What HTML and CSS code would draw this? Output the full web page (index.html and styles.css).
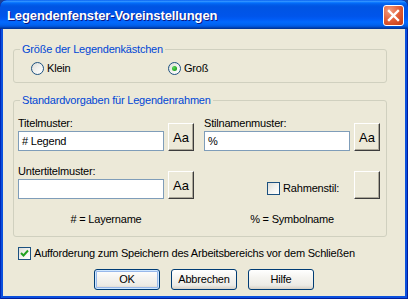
FILE: index.html
```html
<!DOCTYPE html>
<html lang="de">
<head>
<meta charset="utf-8">
<title>Legendenfenster-Voreinstellungen</title>
<link rel="stylesheet" href="styles.css">
</head>
<body>
<div class="window">
  <div class="titlebar">
    <span class="title">Legendenfenster-Voreinstellungen</span>
    <div class="close">
      <svg width="19" height="19" viewBox="0 0 19 19"><path d="M5 5 L14 14 M14 5 L5 14" stroke="#fff" stroke-width="2.4" stroke-linecap="square" fill="none"/></svg>
    </div>
  </div>
  <div class="client">
    <div class="group g1">
      <div class="legend">Größe der Legendenkästchen</div>
      <div class="radios">
        <label class="radio r1"><span class="rb"></span>Klein</label>
        <label class="radio"><span class="rb on"><span class="dot"></span></span>Groß</label>
      </div>
    </div>
    <div class="group g2">
      <div class="legend">Standardvorgaben für Legendenrahmen</div>
      <div class="grid">
        <div class="field">
          <div class="fcol"><div class="lbl">Titelmuster:</div><div class="input"># Legend</div></div>
          <div class="btn3d">Aa</div>
        </div>
        <div class="field">
          <div class="fcol"><div class="lbl">Stilnamenmuster:</div><div class="input">%</div></div>
          <div class="btn3d">Aa</div>
        </div>
        <div class="field">
          <div class="fcol"><div class="lbl">Untertitelmuster:</div><div class="input"></div></div>
          <div class="btn3d">Aa</div>
        </div>
        <div class="rahmen">
          <label class="check rcheck"><span class="cb"></span>Rahmenstil:</label>
          <div class="btn3d"></div>
        </div>
        <div class="note"># = Layername</div>
        <div class="note">% = Symbolname</div>
      </div>
    </div>
    <label class="check save"><span class="cb"><svg width="11" height="11" viewBox="0 0 11 11"><path d="M2 5 L4.5 7.5 L9 2.5" stroke="#21A121" stroke-width="2" fill="none"/></svg></span>Aufforderung zum Speichern des Arbeitsbereichs vor dem Schließen</label>
    <div class="buttons">
      <div class="xpbtn default">OK</div>
      <div class="xpbtn">Abbrechen</div>
      <div class="xpbtn">Hilfe</div>
    </div>
  </div>
</div>
</body>
</html>
```
FILE: styles.css
```css
html, body {
  margin: 0;
  padding: 0;
  background: #1D4193;
}
* { box-sizing: border-box; }

.window {
  width: 408px;
  height: 299px;
  display: flex;
  flex-direction: column;
  background: #0A4FDD;
  border-radius: 7px 7px 0 0;
  overflow: hidden;
  box-shadow: inset 1px 0 #0027B8, inset -1px 0 #001E9C, inset 0 -1px #001E9C;
  font-family: "Liberation Sans", Arial, sans-serif;
  font-size: 11px;
  letter-spacing: -0.2px;
  color: #000;
}

.titlebar {
  height: 29px;
  flex: none;
  display: flex;
  align-items: flex-start;
  padding: 5px 4px 0 7px;
  border-radius: 7px 7px 0 0;
  background: linear-gradient(to bottom, #0058EE 0%, #3593FF 4%, #288EFF 6%, #127DFF 8%, #036FFC 10%, #0262EE 14%, #0057E5 20%, #0054E3 24%, #0055EB 56%, #005BF5 66%, #026AFE 76%, #0062EF 86%, #0052D6 92%, #0040AB 96%, #003092 100%);
}
.title {
  margin-top: 3px;
  font-weight: bold;
  font-size: 13px;
  line-height: 16px;
  letter-spacing: -0.1px;
  color: #fff;
  text-shadow: 1px 1px #0A1883;
}
.close {
  margin-left: auto;
  width: 21px;
  height: 21px;
  border: 1px solid #fff;
  border-radius: 3px;
  background: radial-gradient(circle at 30% 25%, #F19C7F 0%, #E4633D 45%, #D24A22 75%, #C13A17 100%);
}
.close svg { display: block; }

.client {
  flex: 1;
  margin: 0 3px 3px;
  background: #ECE9D8;
  padding: 20px 10px 0;
}

.group {
  width: 374px;
  border: 1px solid #D0D0BF;
  border-radius: 3px;
}
.g1 { height: 34px; }
.g2 { height: 137px; margin-top: 17px; }
.legend {
  width: fit-content;
  margin: -7px 0 0 6px;
  padding: 0 2px;
  height: 13px;
  line-height: 13px;
  background: #ECE9D8;
  color: #0046D5;
}

.radios {
  display: flex;
  margin-top: 6px;
  padding-left: 17px;
}
.radio {
  display: flex;
  align-items: center;
  gap: 3px;
  line-height: 13px;
}
.r1 { width: 137px; }
.rb {
  width: 13px;
  height: 13px;
  border-radius: 50%;
  border: 1px solid #1C5180;
  background: linear-gradient(135deg, #DCDCD7 0%, #F2F2EF 50%, #FFFFFF 100%);
  display: flex;
  align-items: center;
  justify-content: center;
}
.dot {
  width: 5px;
  height: 5px;
  border-radius: 50%;
  background: radial-gradient(circle at 35% 35%, #5BD85A, #21A121 70%, #1B8A1B);
}

.grid {
  display: grid;
  grid-template-columns: 176px 176px;
  grid-template-rows: 34px 34px 13px;
  column-gap: 10px;
  row-gap: 14px;
  margin: 10px 0 0 4px;
}
.field {
  display: flex;
  align-items: flex-end;
  gap: 4px;
}
.fcol {
  width: 146px;
  display: flex;
  flex-direction: column;
}
.lbl {
  height: 13px;
  line-height: 13px;
  white-space: nowrap;
}
.input {
  margin-top: 1px;
  height: 20px;
  border: 1px solid #7F9DB9;
  background: #fff;
  padding-left: 3px;
  line-height: 18px;
  white-space: nowrap;
}
.btn3d {
  width: 26px;
  height: 28px;
  flex: none;
  display: flex;
  align-items: center;
  justify-content: center;
  font-size: 13px;
  letter-spacing: 0;
  background: #ECE9D8;
  border: 1px solid;
  border-color: #FFFFFF #3C3C3C #3C3C3C #FFFFFF;
  box-shadow: inset -1px -1px #ACA899;
}

.rahmen {
  display: flex;
  justify-content: flex-end;
  align-items: flex-end;
  gap: 15px;
}
.check {
  display: flex;
  align-items: center;
  gap: 3px;
  line-height: 13px;
  white-space: nowrap;
  width: fit-content;
}
.rcheck { margin-bottom: 4px; }
.cb {
  width: 13px;
  height: 13px;
  flex: none;
  border: 1px solid #1C5180;
  background: linear-gradient(135deg, #DCDCD7 0%, #F2F2EF 50%, #FFFFFF 100%);
}
.cb svg { display: block; }
.note {
  text-align: center;
  line-height: 13px;
}

.save { margin: 10px 0 0 5px; }

.buttons {
  display: flex;
  justify-content: center;
  gap: 11px;
  margin-top: 9px;
}
.xpbtn {
  width: 66px;
  height: 21px;
  border: 1px solid #003C74;
  border-radius: 3px;
  background: linear-gradient(to bottom, #FFFFFF 0%, #F5F4F0 40%, #ECEBE6 80%, #D6D0C5 100%);
  display: flex;
  align-items: center;
  justify-content: center;
  line-height: 13px;
}
.default {
  box-shadow: inset 0 0 0 1px #CEE7FF, inset 0 0 0 2px #98B8EA;
}
```
